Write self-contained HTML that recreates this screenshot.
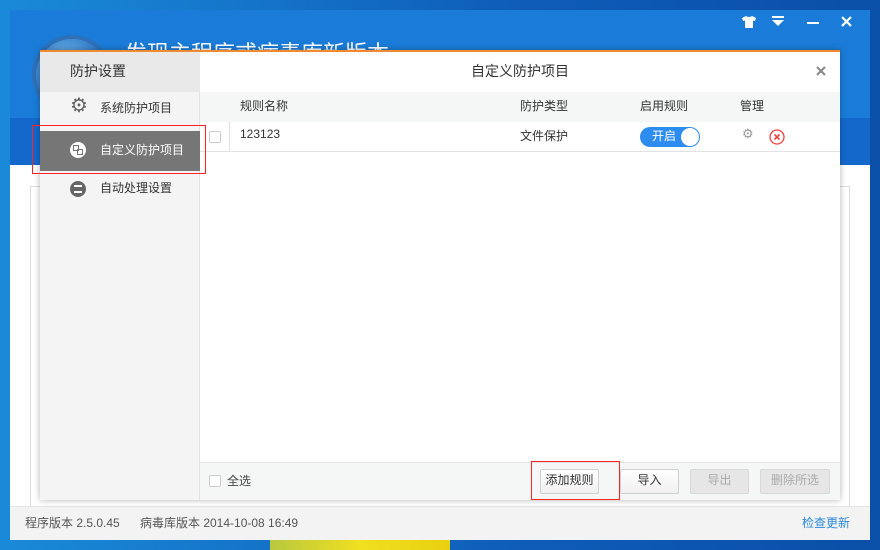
<!DOCTYPE html>
<html><head><meta charset="utf-8">
<style>
*{margin:0;padding:0;box-sizing:border-box}
body{width:880px;height:550px;overflow:hidden;position:relative;background:linear-gradient(90deg,#1a8ad8,#0e5cb8 60%,#0a4fa8);font-family:"Liberation Sans","Noto Sans CJK SC",sans-serif;font-size:12px;color:#333}
.abs{position:absolute}
.flower{left:270px;top:540px;width:180px;height:10px;background:linear-gradient(90deg,#b8c840,#f0e020,#e8d010)}
.app{left:10px;top:10px;width:860px;height:530px;background:#fff;overflow:hidden}
.hdr{left:0;top:0;width:860px;height:155px;background:#1a7cd8}
.band{left:0;top:108px;width:860px;height:47px;background:#1468cc}
.title{left:115px;top:26px;color:#fff;font-size:22px}
.globe{left:22px;top:25px;width:80px;height:80px;border-radius:50%;background:radial-gradient(circle at 40% 35%,#7ab8ea,#2a78c8 60%,#1a60b0);border:4px solid #2f70b8}
.inner{left:20px;top:176px;width:820px;height:330px;border:1px solid #ddd}
.foot{left:0;top:496px;width:860px;height:34px;background:#f3f3f3;border-top:1px solid #e4e4e4}
.foot span{position:absolute;top:7px;font-size:12px;color:#555}
.dlg{left:40px;top:50px;width:800px;height:450px;background:#fff;border-top:2px solid #f08a30;box-shadow:0 0 6px rgba(0,0,0,.3)}
.side{left:0;top:0;width:160px;height:448px;background:#f4f4f4;border-right:1px solid #e2e2e2}
.sidet{left:0;top:0;width:160px;height:40px;background:#e9e9e9;font-size:14px;line-height:38px;padding-left:30px;color:#333}
.item{left:0;width:160px;height:40px;line-height:36px;padding-left:60px;font-size:12px;color:#333}
.item.sel{background:#767676;color:#fff}
.ic{position:absolute;left:30px;top:12px;width:16px;height:16px;border-radius:50%}
.rt{left:160px;top:0;width:640px;height:448px}
.rhead{left:0;top:0;width:640px;height:40px;line-height:38px;text-align:center;font-size:14px;background:#fff}
.thd{left:0;top:40px;width:640px;height:30px;background:#f5f6f6}
.thd span,.row span{position:absolute;top:5px}
.row{left:0;top:70px;width:640px;height:30px;background:#fff;border-bottom:1px solid #e2e2e2}
.cb{position:absolute;width:12px;height:12px;border:1px solid #ccc;border-radius:2px;background:#fff}
.bar{left:0;top:410px;width:640px;height:38px;background:#f5f6f6;border-top:1px solid #e4e4e4}
.btn{position:absolute;top:6px;height:25px;width:59px;border:1px solid #d0d0d0;border-radius:2px;background:linear-gradient(#fff,#f0f0f0);text-align:center;line-height:21px;font-size:12px;color:#333}
.btn.dis{background:#e6e6e6;color:#aaa;border-color:#d8d8d8}
.red{position:absolute;border:1px solid #ff2222}
</style></head><body>
<div class="abs flower"></div>
<div class="abs app">
 <div class="abs hdr"></div>
 <div class="abs band"></div>
 <div class="abs globe"></div>
 <div class="abs title">发现主程序或病毒库新版本</div>
 <svg class="abs" style="left:732px;top:6px" width="14" height="12" viewBox="0 0 14 12"><path d="M0 2 L4 0 Q7 2 10 0 L14 2 L13 5 L11 4.5 L11 12 L3 12 L3 4.5 L1 5 Z" fill="#fff"/></svg>
 <svg class="abs" style="left:762px;top:6px" width="12" height="10" viewBox="0 0 12 10"><rect x="0" y="0" width="12" height="2" fill="#fff"/><path d="M0 4 L12 4 L6 10 Z" fill="#fff"/></svg>
 <div class="abs" style="left:797px;top:12px;width:12px;height:2px;background:#fff"></div>
 <svg class="abs" style="left:831px;top:6px" width="11" height="11" viewBox="0 0 11 11"><path d="M1 1 L10 10 M10 1 L1 10" stroke="#fff" stroke-width="2.2"/></svg>
 <div class="abs inner"></div>
 <div class="abs foot"><span style="left:15px">程序版本 2.5.0.45</span><span style="left:130px">病毒库版本 2014-10-08 16:49</span><span style="left:792px;color:#2a88d8">检查更新</span></div>
</div>
<div class="abs dlg">
 <div class="abs side">
  <div class="abs sidet">防护设置</div>
  <div class="abs item" style="top:38px"><span class="ic" style="color:#666;font-size:20px;top:6px;line-height:20px;border-radius:0">⚙</span>系统防护项目</div>
  <div class="abs item sel" style="top:79px;line-height:38px"><span class="ic" style="background:#fff;top:11px"><span style="position:absolute;left:3px;top:3px;width:6px;height:6px;border:1.5px solid #777"></span><span style="position:absolute;left:7px;top:7px;width:6px;height:6px;border:1.5px solid #777"></span></span>自定义防护项目</div>
  <div class="abs item" style="top:118px"><span class="ic" style="background:#666;top:11px"><span style="position:absolute;left:4px;top:4px;width:8px;height:8px;border-top:2px solid #fff;border-bottom:2px solid #fff"></span></span>自动处理设置</div>
 </div>
 <div class="abs rt">
  <div class="abs rhead">自定义防护项目<svg style="position:absolute;right:14px;top:14px" width="10" height="10" viewBox="0 0 10 10"><path d="M1 1 L9 9 M9 1 L1 9" stroke="#888" stroke-width="2"/></svg></div>
  <div class="abs thd"><span style="left:40px">规则名称</span><span style="left:320px">防护类型</span><span style="left:440px">启用规则</span><span style="left:540px">管理</span></div>
  <div class="abs row"><span class="cb" style="left:9px;top:9px"></span><span style="left:29px;top:0;width:1px;height:30px;background:#e2e2e2"></span><span style="left:40px">123123</span><span style="left:320px">文件保护</span>
   <span style="left:440px;top:5px;width:60px;height:20px;border-radius:10px;background:#2d8cf0;color:#fff;line-height:18px;padding-left:12px">开启<span style="position:absolute;right:1px;top:1px;width:18px;height:18px;border-radius:50%;background:#fff"></span></span>
   <span style="left:542px;top:4px;color:#999;font-size:13px">⚙</span>
   <svg style="position:absolute;left:569px;top:7px" width="16" height="16" viewBox="0 0 16 16"><circle cx="8" cy="8" r="7" fill="none" stroke="#f04040" stroke-width="1.3"/><path d="M5.5 5.5 L10.5 10.5 M10.5 5.5 L5.5 10.5" stroke="#f04040" stroke-width="1.6"/></svg></div>
  <div class="abs bar">
   <span class="cb" style="left:9px;top:12px"></span><span style="position:absolute;left:27px;top:9px;color:#444">全选</span>
   <div class="btn" style="left:340px">添加规则</div>
   <div class="btn" style="left:420px">导入</div>
   <div class="btn dis" style="left:490px">导出</div>
   <div class="btn dis" style="left:560px;width:70px">删除所选</div>
  </div>
 </div>
</div>
<div class="red" style="left:32px;top:125px;width:174px;height:49px"></div>
<div class="red" style="left:531px;top:461px;width:89px;height:39px"></div>
</body></html>
